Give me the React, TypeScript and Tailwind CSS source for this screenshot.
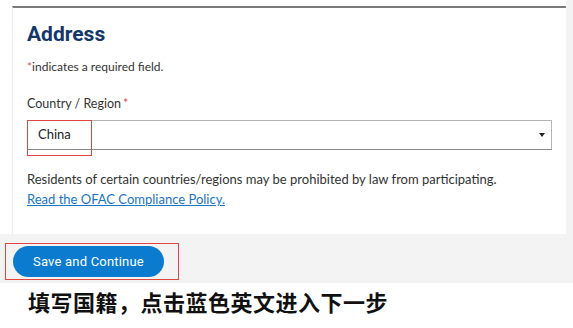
export default function App() {
  return (
    <div className="w-[573px] h-[328px] bg-white overflow-hidden font-['Lato',sans-serif] text-[#333]">
      {/* Top: form card */}
      <div className="flex h-[234px]">
        <div className="w-[12px] shrink-0 bg-white" />
        <div className="flex-1 mt-[6px] bg-white border-t-2 border-t-[#7a7a7a] border-l border-l-[#ececec] px-[14px]">
          <h2 className="mt-[13px] font-['Roboto',sans-serif] font-bold text-[21px] leading-[26px] text-[#13366b]">
            Address
          </h2>
          <p className="mt-[12px] text-[12px] leading-[16px]">
            <span className="text-[#d9534f]">*</span>indicates a required field.
          </p>
          <label className="block mt-[21px] text-[12.5px] leading-[16px]">
            Country / Region<span className="text-[#d9534f] ml-[2px]">*</span>
          </label>
          <div className="relative mt-[8px]">
            <div className="h-[30px] border border-[#b5b5b5] border-b-[#8a8a8a] flex items-center justify-between pl-[10px] pr-[4px] text-[13px] text-[#222]">
              <span>China</span>
              <svg width="8" height="6" viewBox="0 0 8 6" className="mr-[1px]">
                <path d="M1 1 L7 1 L4 5 Z" fill="#222" />
              </svg>
            </div>
            <div className="absolute left-0 top-0 w-[65px] h-[36px] border border-[#e0463f]" />
          </div>
          <p className="mt-[21px] text-[13px] leading-[16px] whitespace-nowrap">
            Residents of certain countries/regions may be prohibited by law from participating.
          </p>
          <a className="block mt-[4px] text-[13px] leading-[16px] text-[#1a74c5] underline">
            Read the OFAC Compliance Policy.
          </a>
        </div>
        <div className="w-[7px] shrink-0 bg-[#f3f3f3]" />
      </div>

      {/* Bottom: actions */}
      <div className="h-[49px] bg-[#f3f3f3] relative">
        <div className="absolute left-[5px] top-[9px] w-[174px] h-[37px] border border-[#e0463f]" />
        <div className="pl-[13px] pt-[12px]">
          <button className="h-[31px] w-[151px] rounded-full bg-[#0b7bd0] text-white font-['Roboto',sans-serif] text-[13px] tracking-[0.2px]">
            Save and Continue
          </button>
        </div>
      </div>

      <p className="pl-[28px] pt-[3px] font-['Noto_Sans_CJK_SC',sans-serif] font-bold text-[22px] leading-[30px] tracking-[0.5px] text-[#111]">
        填写国籍，点击蓝色英文进入下一步
      </p>
    </div>
  );
}
